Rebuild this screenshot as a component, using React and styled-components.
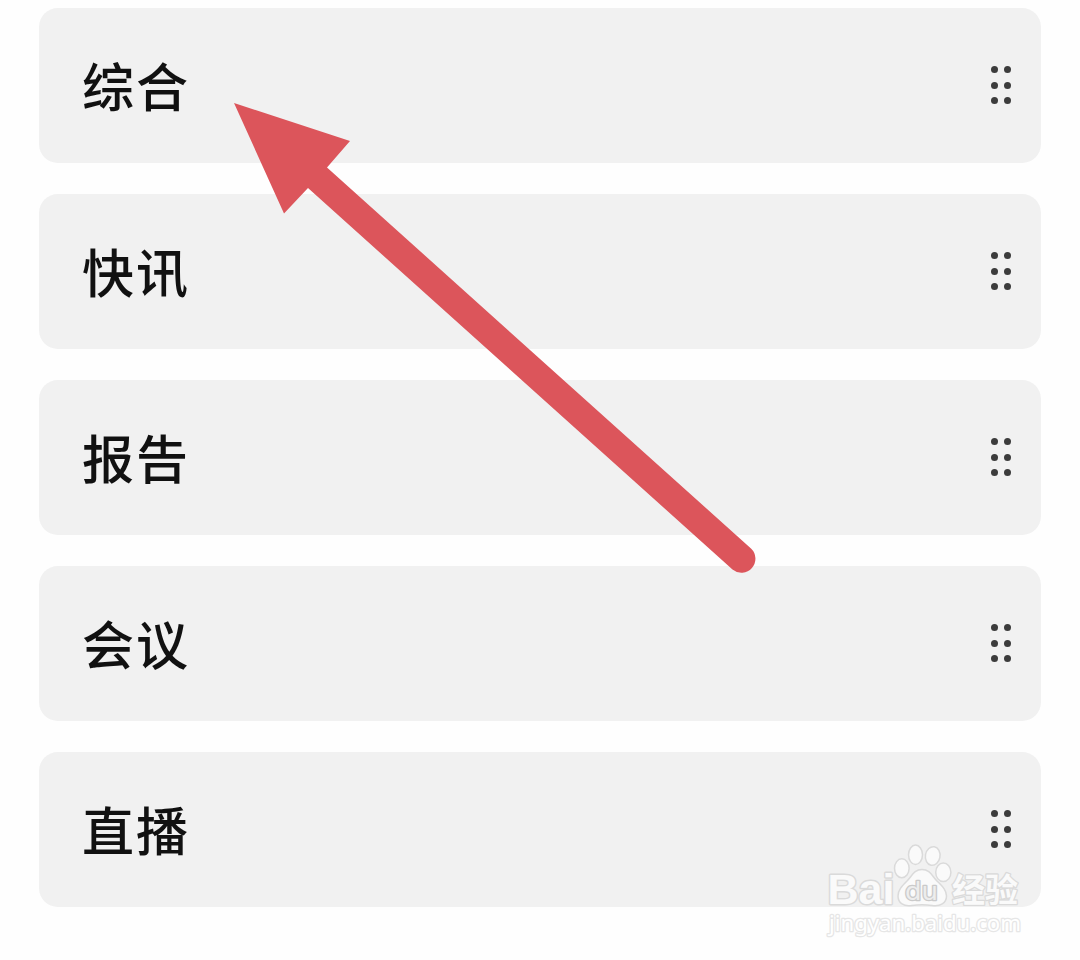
import React from "react";
import styled, { createGlobalStyle } from "styled-components";

const GlobalStyle = createGlobalStyle`
  body {
    margin: 0;
    background: #fefefe;
    font-family: "Noto Sans CJK SC", sans-serif;
  }
`;

const Page = styled.main`
  position: relative;
  box-sizing: border-box;
  width: 1080px;
  height: 960px;
  padding: 8px 39px 0;
  overflow: hidden;
`;

const List = styled.ul`
  display: flex;
  flex-direction: column;
  gap: 31px;
  margin: 0;
  padding: 0;
  list-style: none;
`;

const Row = styled.li`
  display: flex;
  align-items: center;
  justify-content: space-between;
  box-sizing: border-box;
  height: 155px;
  padding: 0 30px 0 43px;
  border-radius: 19px;
  background: #f1f1f1;
`;

const Label = styled.span`
  color: #111;
  font-size: 52px;
  font-weight: 500;
  line-height: 76px;
  letter-spacing: 2px;
  padding-bottom: 1px;
`;

const Handle = styled.span`
  display: grid;
  grid-template-columns: 7px 7px;
  gap: 8.5px 6px;
  padding-bottom: 1px;
`;

const Dot = styled.i`
  width: 7px;
  height: 7px;
  border-radius: 50%;
  background: #3c3c3c;
`;

const Arrow = styled.svg`
  position: absolute;
  top: 0;
  left: 0;
  pointer-events: none;
`;

const Watermark = styled.svg`
  position: absolute;
  left: 820px;
  top: 840px;
  fill: #fafafa;
  stroke: #dadada;
  stroke-width: 1.5px;
  stroke-linejoin: round;
`;

const Brand = styled.text`
  font: bold 43px "Liberation Sans", sans-serif;
  paint-order: stroke;
  stroke-width: 3px;
`;

const BrandInner = styled.text`
  font: 24px "DejaVu Sans", sans-serif;
  fill: #ededed;
  stroke: #cacaca;
  stroke-width: 2.6px;
  paint-order: stroke;
`;

const BrandName = styled.text`
  font: bold 33px "Noto Sans CJK SC", sans-serif;
  paint-order: stroke;
  stroke-width: 2.6px;
`;

const Address = styled.text`
  font: 22px "Noto Sans", sans-serif;
  fill: #fff;
  stroke: #e6e6e6;
  stroke-width: 2.6px;
  paint-order: stroke;
`;

const tabs = ["综合", "快讯", "报告", "会议", "直播"];

const DragHandle = () => (
  <Handle>
    <Dot />
    <Dot />
    <Dot />
    <Dot />
    <Dot />
    <Dot />
  </Handle>
);

const App = () => (
  <Page>
    <GlobalStyle />
    <List>
      {tabs.map(tab => (
        <Row key={tab}>
          <Label>{tab}</Label>
          <DragHandle />
        </Row>
      ))}
    </List>
    <Arrow width="1080" height="960">
      <path
        d="M234 103L350 141L327 167.5L751 548.5A14 14 0 0 1 732.5 569.5L308 188L284 213.5Z"
        fill="#dc555b"
      />
    </Arrow>
    <Watermark width="220" height="110">
      <Brand x="7.5" y="63.5" textLength="67" lengthAdjust="spacingAndGlyphs">
        Bai
      </Brand>
      <ellipse cx="81.8" cy="28.3" rx="7.3" ry="9.5" />
      <ellipse cx="95.5" cy="14.8" rx="7" ry="9.7" />
      <ellipse cx="112.7" cy="16" rx="7.3" ry="9.4" transform="rotate(10 112.7 16)" />
      <ellipse cx="123.3" cy="32.3" rx="7.6" ry="9.3" />
      <path d="M102 29.5C110 29.5 112 36 117 41C122 46 126.5 50 126.5 56C126.5 63 120 67 112 65.5C105 64.5 99 64.5 92 65.5C84 67 78 63 78 56C78 50 82 46 87 41C92 36 94 29.5 102 29.5Z" />
      <BrandInner x="85" y="60" textLength="33" lengthAdjust="spacingAndGlyphs">
        du
      </BrandInner>
      <BrandName x="132" y="61.5" textLength="66" lengthAdjust="spacingAndGlyphs">
        经验
      </BrandName>
      <Address x="9" y="90.5" textLength="192" lengthAdjust="spacingAndGlyphs">
        jingyan.baidu.com
      </Address>
    </Watermark>
  </Page>
);

export default App;
